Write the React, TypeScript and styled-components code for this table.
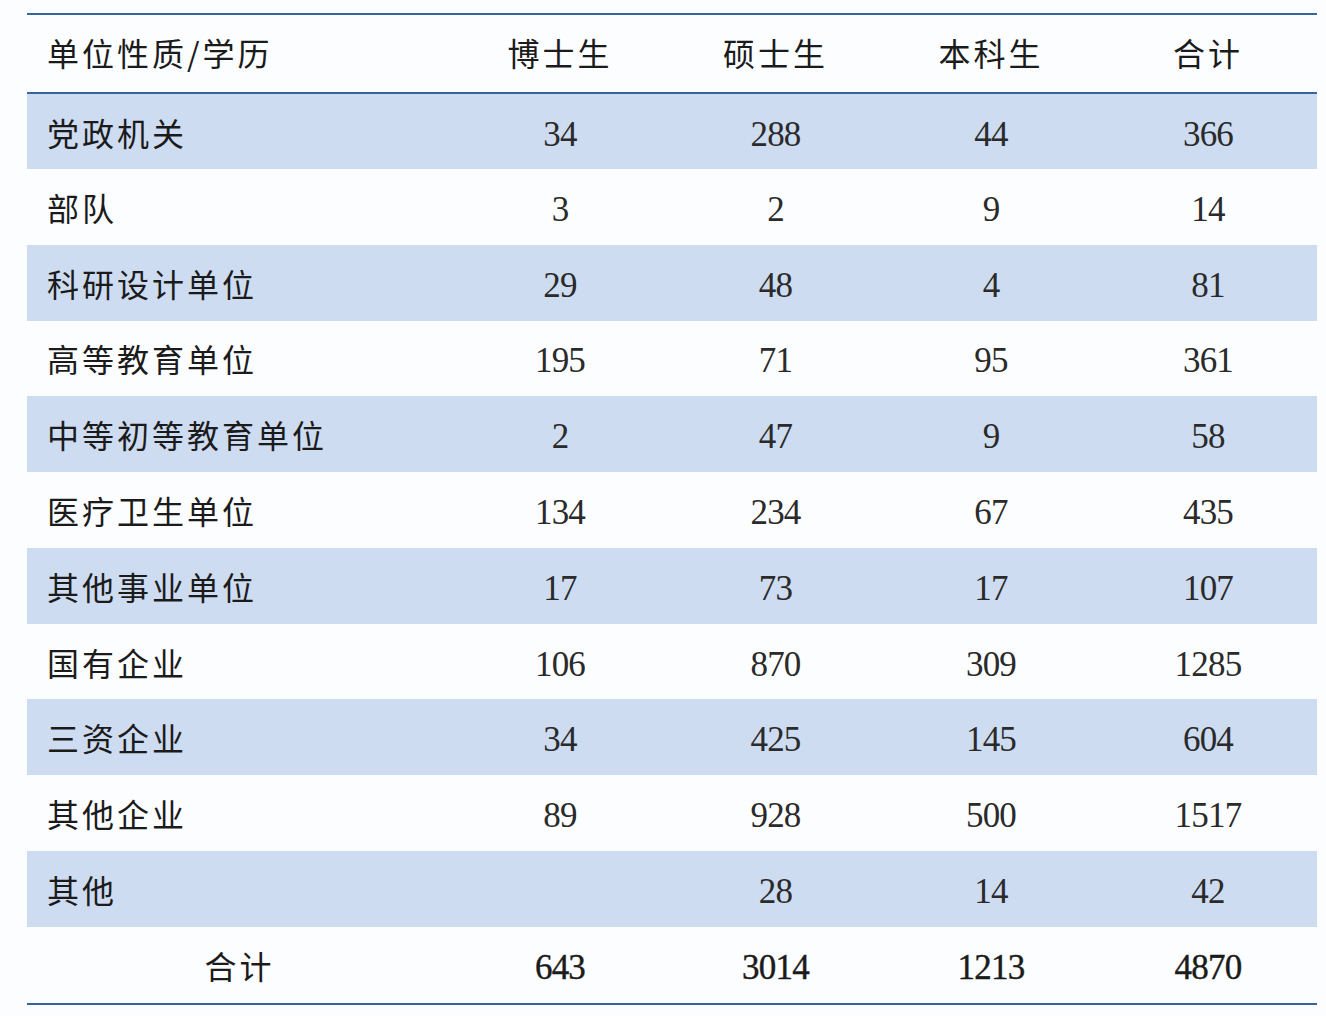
import React from "react";
import styled, { createGlobalStyle } from "styled-components";

const Global = createGlobalStyle`
  html, body { margin: 0; padding: 0; background: #fcfdfe; }
  body { width: 1326px; height: 1016px; overflow: hidden; }
`;

const Page = styled.div`
  padding: 13px 9px 0 27px;
`;

const Table = styled.table`
  width: 1290px;
  border-collapse: collapse;
  table-layout: fixed;
  border-top: 2px solid #35659c;
  border-bottom: 2px solid #35659c;
  color: #1b1b1b;
`;

const HeadRow = styled.tr`
  height: 79px;
  border-bottom: 2px solid #35659c;
`;

const Row = styled.tr<{ $band?: boolean }>`
  height: ${(p) => (p.$band ? "76px" : "75.6px")};
  background: ${(p) => (p.$band ? "#cedcf1" : "transparent")};
`;

const TotalRow = styled.tr`
  height: 77px;
`;

const HeadCell = styled.th<{ $left?: boolean }>`
  padding: 0 0 4px ${(p) => (p.$left ? "20px" : "0")};
  text-align: ${(p) => (p.$left ? "left" : "center")};
  font-family: "Noto Sans CJK SC", "Noto Sans", sans-serif;
  font-weight: 400;
  font-size: 32px;
  letter-spacing: 3px;
`;

const Label = styled.td<{ $center?: boolean }>`
  padding: 0 0 0 ${(p) => (p.$center ? "0" : "20px")};
  text-align: ${(p) => (p.$center ? "center" : "left")};
  font-family: "Noto Sans CJK SC", "Noto Sans", sans-serif;
  font-size: 32px;
  letter-spacing: 3px;
  white-space: nowrap;
`;

const Num = styled.td<{ $strong?: boolean }>`
  padding: 6px 0 0 0;
  text-align: center;
  font-family: "Liberation Serif", "Times New Roman", serif;
  font-size: 35px;
  letter-spacing: -0.8px;
  color: ${(p) => (p.$strong ? "#1b1b1b" : "#2a2a2a")};
  -webkit-text-stroke: ${(p) => (p.$strong ? "0.4px #1b1b1b" : "0")};
`;

const rows: [string, string, string, string, string][] = [
  ["党政机关", "34", "288", "44", "366"],
  ["部队", "3", "2", "9", "14"],
  ["科研设计单位", "29", "48", "4", "81"],
  ["高等教育单位", "195", "71", "95", "361"],
  ["中等初等教育单位", "2", "47", "9", "58"],
  ["医疗卫生单位", "134", "234", "67", "435"],
  ["其他事业单位", "17", "73", "17", "107"],
  ["国有企业", "106", "870", "309", "1285"],
  ["三资企业", "34", "425", "145", "604"],
  ["其他企业", "89", "928", "500", "1517"],
  ["其他", "", "28", "14", "42"],
];

export default function App() {
  return (
    <>
      <Global />
      <Page>
        <Table>
          <colgroup>
            <col style={{ width: 425 }} />
            <col style={{ width: 216 }} />
            <col style={{ width: 215 }} />
            <col style={{ width: 216 }} />
            <col style={{ width: 218 }} />
          </colgroup>
          <thead>
            <HeadRow>
              <HeadCell $left>单位性质/学历</HeadCell>
              <HeadCell>博士生</HeadCell>
              <HeadCell>硕士生</HeadCell>
              <HeadCell>本科生</HeadCell>
              <HeadCell>合计</HeadCell>
            </HeadRow>
          </thead>
          <tbody>
            {rows.map((r, i) => (
              <Row key={r[0]} $band={i % 2 === 0}>
                <Label>{r[0]}</Label>
                <Num>{r[1]}</Num>
                <Num>{r[2]}</Num>
                <Num>{r[3]}</Num>
                <Num>{r[4]}</Num>
              </Row>
            ))}
            <TotalRow>
              <Label $center>合计</Label>
              <Num $strong>643</Num>
              <Num $strong>3014</Num>
              <Num $strong>1213</Num>
              <Num $strong>4870</Num>
            </TotalRow>
          </tbody>
        </Table>
      </Page>
    </>
  );
}
